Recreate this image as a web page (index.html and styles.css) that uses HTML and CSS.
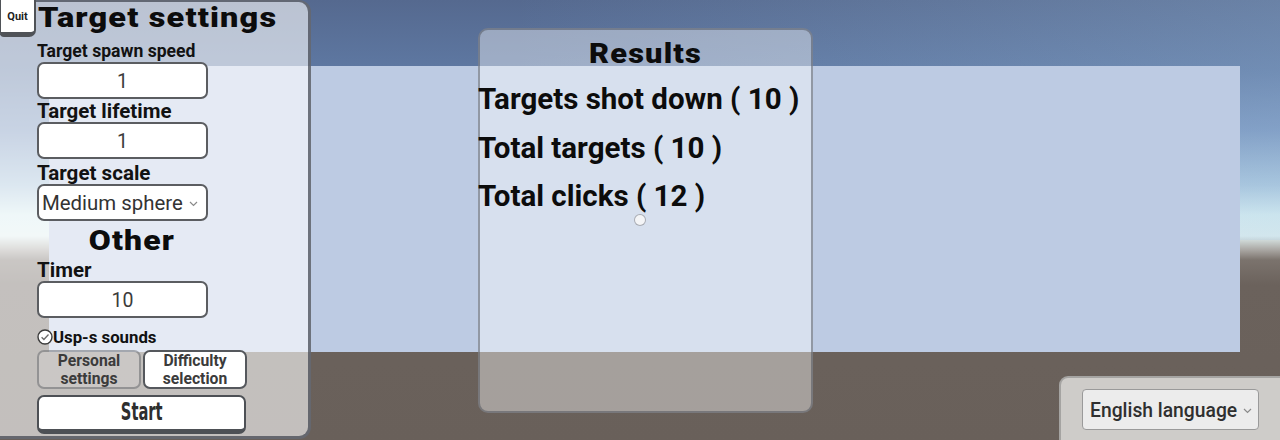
FILE: index.html
```html
<!DOCTYPE html>
<html lang="en">
<head>
<meta charset="utf-8">
<title>Aim trainer</title>
<link rel="stylesheet" href="styles.css">
</head>
<body>
<div class="scene">
  <div class="backdrop"></div>
  <div class="hud">
    <aside class="settings">
      <div class="settings-head">
        <button class="quit">Quit</button>
        <h1 class="title"><span>Target settings</span></h1>
      </div>
      <div class="form">
        <label class="label label-sm">Target spawn speed</label>
        <div class="field">1</div>
        <label class="label label-lg">Target lifetime</label>
        <div class="field">1</div>
        <label class="label label-md">Target scale</label>
        <div class="select">
          <span>Medium sphere</span>
          <svg class="chev" width="9" height="6" viewBox="0 0 9 6"><path d="M1 1l3.5 3.5L8 1" fill="none" stroke="#8a8a8a" stroke-width="1.2"/></svg>
        </div>
        <h2 class="subtitle"><span>Other</span></h2>
        <label class="label label-lg">Timer</label>
        <div class="field">10</div>
        <div class="check-row">
          <span class="check">
            <svg width="16" height="16" viewBox="0 0 16 16"><circle cx="8" cy="8" r="7" fill="#fff" stroke="#3c3c3c" stroke-width="1.4"/><path d="M4.6 8.2l2.3 2.3 4.6-5" fill="none" stroke="#6a6a6a" stroke-width="1.3"/></svg>
          </span>
          <span class="check-text">Usp-s sounds</span>
        </div>
        <div class="tabs">
          <button class="tab tab-muted">Personal<br>settings</button>
          <button class="tab">Difficulty<br>selection</button>
        </div>
        <button class="start"><span>Start</span></button>
      </div>
    </aside>

    <section class="results">
      <h2 class="results-title"><span>Results</span></h2>
      <p class="stat">Targets shot down ( 10 )</p>
      <p class="stat">Total targets ( 10 )</p>
      <p class="stat">Total clicks ( 12 )</p>
    </section>

    <div class="lang">
      <div class="lang-select">
        <span>English language</span>
        <svg class="chev" width="9" height="6" viewBox="0 0 9 6"><path d="M1 1l3.5 3.5L8 1" fill="none" stroke="#8a8a8a" stroke-width="1.2"/></svg>
      </div>
    </div>
  </div>
  <div class="crosshair"></div>
</div>
</body>
</html>
```

FILE: styles.css
```css
* { box-sizing: border-box; }

html, body {
  margin: 0;
  padding: 0;
  width: 1280px;
  height: 440px;
  overflow: hidden;
}

body {
  font-family: Roboto, "Noto Sans", "Liberation Sans", sans-serif;
  color: #111;
}

/* sky, horizon and ground behind the HUD */
.scene {
  position: relative;
  width: 1280px;
  height: 440px;
  background:
    linear-gradient(to right, rgba(255,255,255,0) 40%, rgba(170,205,235,0.25) 100%) 0 0 / 100% 240px no-repeat,
    linear-gradient(to bottom,
      #55698f 0px,
      #5e78a2 70px,
      #7692bb 130px,
      #a7c3da 185px,
      #d6ecef 215px,
      #dfeeee 236px,
      #a9a6a2 250px,
      #7b736d 260px,
      #6b625c 285px,
      #69605a 100%);
}

/* flat pale-blue board stretched across the view */
.backdrop {
  position: absolute;
  left: 49px;
  top: 66px;
  width: 1191px;
  height: 286px;
  background: #bdcbe3;
}

.hud {
  position: relative;
  display: flex;
  align-items: flex-start;
  height: 440px;
}

/* left settings panel */
.settings {
  flex: 0 0 311px;
  height: 439px;
  background: rgba(255, 255, 255, 0.6);
  border: 3px solid rgba(70, 74, 84, 0.75);
  border-left: none;
  border-top-width: 2px;
  border-radius: 0 12px 12px 0;
}

.settings-head {
  display: flex;
  align-items: flex-start;
  margin-top: -2px;
}

.quit {
  flex: 0 0 36px;
  height: 37px;
  display: flex;
  align-items: center;
  justify-content: center;
  padding: 0;
  background: #fff;
  border: 2px solid #4f5257;
  border-top: none;
  border-left-width: 1px;
  border-bottom-width: 5px;
  border-radius: 0 0 7px 4px;
  font: 700 11px Roboto, "Liberation Sans", sans-serif;
  color: #222;
}

/* heavy display headings, drawn a little wider than the face */
.title,
.subtitle,
.results-title {
  font-family: Roboto, "Liberation Sans", sans-serif;
  font-weight: 900;
  color: #0c0c0c;
  white-space: nowrap;
}
.title span,
.subtitle span,
.results-title span {
  display: inline-block;
  letter-spacing: 1px;
  transform: scaleX(1.14);
}

.title {
  margin: 0 0 0 2px;
  font-size: 28.5px;
  line-height: 36px;
}
.title span { transform-origin: left center; }

.form {
  display: flex;
  flex-direction: column;
  align-items: flex-start;
  padding-left: 37px;
}

.label {
  display: block;
  font-weight: 700;
  color: #121212;
  white-space: nowrap;
}
.label-sm { font-size: 17.6px; line-height: 20px; margin-top: 4px; margin-bottom: 1px; }
.label-lg { font-size: 20.5px; line-height: 22px; margin-top: 1px; }
.label-md { font-size: 20.6px; line-height: 22px; margin-top: 3px; }

.field,
.select {
  width: 171px;
  height: 37px;
  background: #fff;
  border: 2px solid #5b5d61;
  border-radius: 7px;
  font-size: 19.5px;
  color: #3b3b3b;
}

.field {
  display: flex;
  align-items: center;
  justify-content: center;
  padding-top: 1px;
}

.select {
  display: flex;
  align-items: center;
  justify-content: space-between;
  padding: 1px 8px 0 3px;
  font-size: 20.4px;
  color: #333;
}

.chev { flex: none; margin-top: 2px; }

.subtitle {
  align-self: stretch;
  margin: 3px 0 0;
  padding-right: 81px;
  text-align: center;
  font-size: 28px;
  line-height: 34px;
}

.check-row {
  display: flex;
  align-items: center;
  margin-top: 9px;
  height: 20px;
}
.check { display: flex; }
.check-text {
  font-weight: 700;
  font-size: 16.8px;
  color: #111;
}

.tabs {
  display: flex;
  gap: 2px;
  margin-top: 3px;
}

.tab {
  width: 104px;
  height: 39px;
  padding: 0;
  background: #fff;
  border: 2px solid #55585d;
  border-radius: 7px;
  font: 700 15.7px/18px Roboto, "Liberation Sans", sans-serif;
  color: #3b3b3b;
}
.tab-muted {
  background: rgba(255, 255, 255, 0.12);
  border-color: rgba(80, 82, 88, 0.45);
}

.start {
  width: 209px;
  height: 39px;
  margin-top: 6px;
  padding: 0 0 2px;
  background: #fff;
  border: 2px solid #4d5055;
  border-bottom-width: 5px;
  border-radius: 7px;
  font: 700 24px/30px "DejaVu Sans Condensed", "Liberation Sans", sans-serif;
  color: #2e2e2e;
}
.start span {
  display: inline-block;
  transform: scaleX(0.68);
}

/* results window */
.results {
  flex: 0 0 335px;
  height: 385px;
  margin: 28px 0 0 167px;
  background: rgba(255, 255, 255, 0.4);
  border: 2px solid rgba(75, 80, 90, 0.5);
  border-radius: 10px;
}

.results-title {
  margin: 6px 0 0;
  text-align: center;
  font-size: 27px;
  line-height: 36px;
}

.stat {
  margin: 0 0 0 -2px;
  font: 700 29.5px/48.5px Roboto, "Liberation Sans", sans-serif;
  color: #0c0c0c;
  white-space: nowrap;
}
.results-title + .stat { margin-top: 3px; }

/* language picker */
.lang {
  align-self: flex-end;
  margin-left: auto;
  width: 221px;
  height: 65px;
  margin-bottom: -1px;
  padding: 11px 0 0 21px;
  background: rgba(235, 234, 232, 0.78);
  border: 2px solid rgba(90, 90, 90, 0.35);
  border-right: none;
  border-bottom: none;
  border-radius: 9px 0 0 0;
}

.lang-select {
  display: flex;
  align-items: center;
  justify-content: space-between;
  width: 177px;
  height: 41px;
  padding: 1px 6px 0 7px;
  background: #ececec;
  border: 1px solid #9a9a9a;
  border-radius: 4px;
  font-weight: 500;
  font-size: 19.3px;
  color: #2f2f2f;
}

/* aiming dot */
.crosshair {
  position: absolute;
  left: 634px;
  top: 214px;
  width: 12px;
  height: 12px;
  border-radius: 50%;
  background: #f4f5f7;
  border: 1px solid rgba(120, 125, 135, 0.6);
}
```
